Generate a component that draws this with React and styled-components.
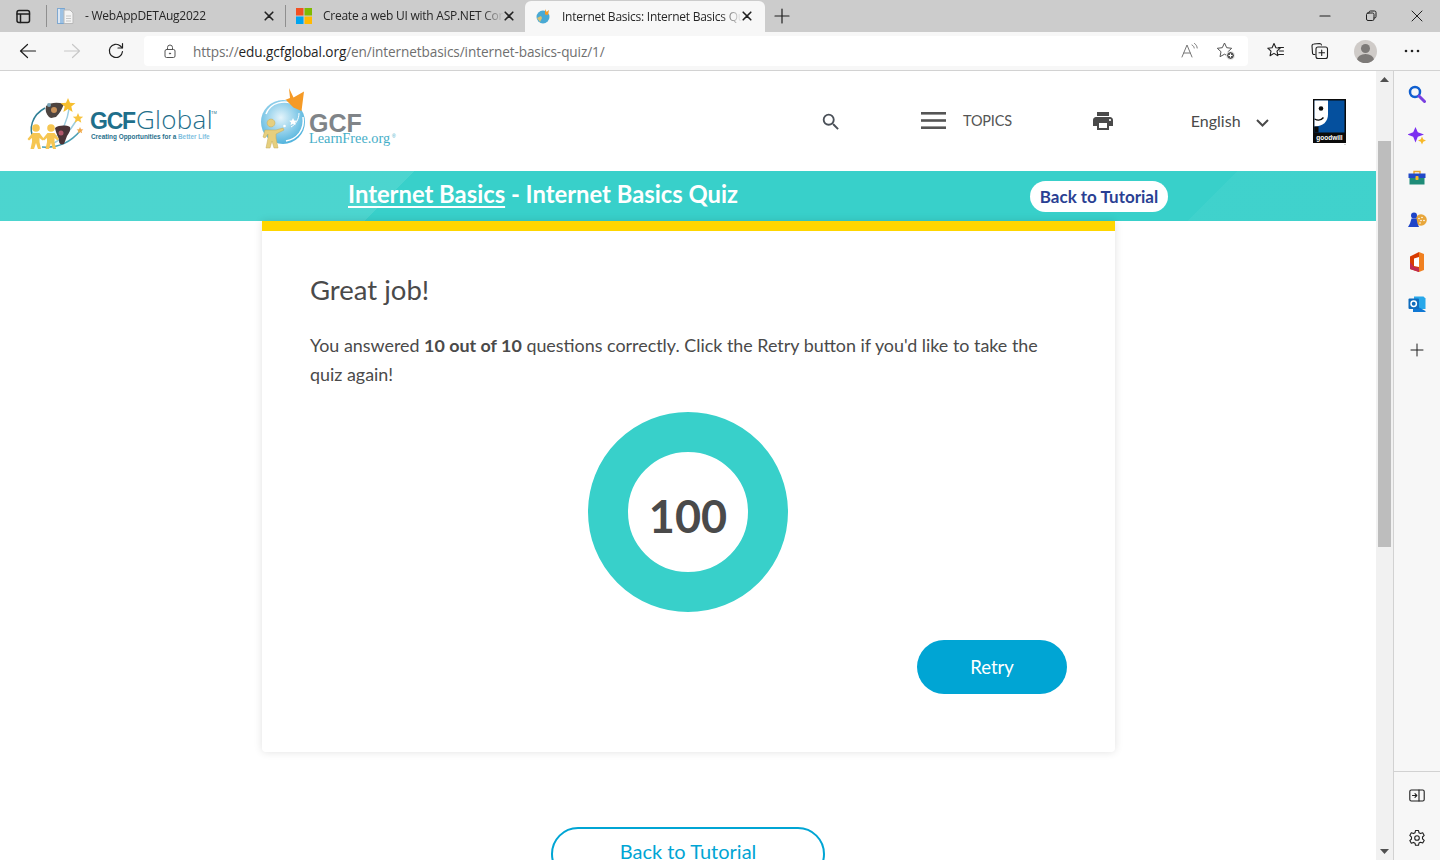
import React from 'react';
import styled, { createGlobalStyle } from 'styled-components';

const GlobalStyle = createGlobalStyle`
  html, body { margin: 0; padding: 0; height: 100%; overflow: hidden; background: #fff; }
  body { font-family: "Lato", "Noto Sans", sans-serif; color: #4a4a4a; }
  * { box-sizing: border-box; }
`;

const Window = styled.div`
  width: 1440px;
  height: 860px;
  display: flex;
  flex-direction: column;
  overflow: hidden;
`;

/* browser chrome */
const TabStrip = styled.div`
  height: 32px;
  background: #cccccc;
  display: flex;
  align-items: flex-end;
  flex-shrink: 0;
`;

const StripButton = styled.div`
  width: 47px;
  height: 32px;
  display: flex;
  align-items: center;
  justify-content: center;
  border-right: 1px solid #8f8f8f;
  border-image: linear-gradient(transparent 6px, #8f8f8f 6px, #8f8f8f 26px, transparent 26px) 1;
  flex-shrink: 0;
`;

const Tab = styled.div`
  width: ${p => p.$width}px;
  height: ${p => (p.$active ? 31 : 32)}px;
  margin-left: ${p => p.$gap || 0}px;
  padding: 0 ${p => p.$end || 11}px 1px 10px;
  display: flex;
  align-items: center;
  background: ${p => (p.$active ? '#f7f7f7' : 'transparent')};
  border-radius: 6px 6px 0 0;
  border-right: ${p => (p.$divider ? '1px solid #8f8f8f' : '0')};
  border-image: ${p => (p.$divider ? 'linear-gradient(transparent 6px, #8f8f8f 6px, #8f8f8f 26px, transparent 26px) 1' : 'none')};
  flex-shrink: 0;
`;

const TabTitle = styled.span`
  flex: 1;
  margin-left: ${p => p.$indent}px;
  font-family: "Open Sans", "Noto Sans", sans-serif;
  font-size: 12px;
  letter-spacing: -0.25px;
  color: #262626;
  white-space: nowrap;
  overflow: hidden;
  -webkit-mask-image: linear-gradient(90deg, #000 88%, transparent);
  mask-image: linear-gradient(90deg, #000 88%, transparent);
`;

const NewTab = styled.div`
  width: 34px;
  height: 32px;
  display: flex;
  align-items: center;
  justify-content: center;
`;

const WindowControls = styled.div`
  margin-left: auto;
  height: 32px;
  display: flex;
`;

const WindowButton = styled.div`
  width: 46px;
  height: 32px;
  display: flex;
  align-items: center;
  justify-content: center;
`;

const Toolbar = styled.div`
  height: 39px;
  background: #f7f7f7;
  border-bottom: 1px solid #d2d2d2;
  display: flex;
  align-items: center;
  padding-left: 6px;
  flex-shrink: 0;
`;

const ToolButton = styled.div`
  width: ${p => p.$width || 44}px;
  height: 30px;
  display: flex;
  align-items: center;
  justify-content: center;
  flex-shrink: 0;
`;

const AddressBar = styled.div`
  width: 1104px;
  height: 30px;
  margin: 0 6px;
  background: #fff;
  border-radius: 4px;
  display: flex;
  align-items: center;
  padding: 0 3px 0 19px;
  flex-shrink: 0;
`;

const Url = styled.div`
  margin-left: 16px;
  flex: 1;
  font-family: "Open Sans", "Noto Sans", sans-serif;
  font-size: 13.6px;
  letter-spacing: -0.1px;
  color: #6f6f6f;
  b { font-weight: 400; color: #1f1f1f; }
`;

const Avatar = styled.div`
  width: 23px;
  height: 23px;
  border-radius: 50%;
  background: #cfcbc8;
  position: relative;
  overflow: hidden;
  &::before {
    content: '';
    position: absolute;
    left: 7px;
    top: 4px;
    width: 9px;
    height: 9px;
    border-radius: 50%;
    background: #7d7a78;
  }
  &::after {
    content: '';
    position: absolute;
    left: 3px;
    top: 14px;
    width: 17px;
    height: 12px;
    border-radius: 50%;
    background: #7d7a78;
  }
`;

/* content area */
const Body = styled.div`
  flex: 1;
  display: flex;
  min-height: 0;
`;

const Page = styled.div`
  width: 1376px;
  height: 100%;
  overflow: hidden;
  background: #fff;
  flex-shrink: 0;
`;

const Header = styled.header`
  height: 100px;
  display: flex;
  align-items: center;
  padding-left: 28px;
`;

const LogoBox = styled.div`
  width: ${p => p.$width}px;
  margin-left: ${p => p.$gap || 0}px;
  height: ${p => p.$height}px;
  flex-shrink: 0;
  svg { display: block; overflow: visible; }
`;

const NavItem = styled.div`
  display: flex;
  align-items: center;
  margin-left: ${p => p.$gap}px;
  margin-top: ${p => p.$drop || 0}px;
  flex-shrink: 0;
  color: #4a4a4a;
`;

const NavLabel = styled.span`
  font-size: ${p => p.$size}px;
  letter-spacing: ${p => p.$track || 0}px;
  margin-left: ${p => p.$indent || 0}px;
  margin-bottom: 1px;
  color: ${p => p.$color || '#555'};
`;

const Chevron = styled.svg`
  margin: 3px 0 0 15px;
`;

const Band = styled.div`
  height: 50px;
  display: flex;
  align-items: center;
  padding-left: 348px;
  background:
    linear-gradient(135deg, rgba(255,255,255,0.1) 293px, transparent 293px),
    linear-gradient(135deg, transparent 875px, rgba(255,255,255,0.04) 875px),
    #38d0ca;
`;

const BandTitle = styled.h1`
  margin: 0 0 5px;
  width: 682px;
  font-size: 23.8px;
  font-weight: 700;
  color: #fff;
  white-space: nowrap;
  a { color: inherit; text-decoration: underline; text-underline-offset: 3px; }
`;

const BandButton = styled.a`
  width: 138px;
  height: 31px;
  border-radius: 16px;
  background: #fff;
  color: #2a3f93;
  font-size: 17px;
  font-weight: 700;
  display: flex;
  align-items: center;
  justify-content: center;
  white-space: nowrap;
`;

const Card = styled.section`
  width: 853px;
  height: 531px;
  margin-left: 262px;
  background: #fff;
  border-top: 10px solid #ffd600;
  box-shadow: 0 0 8px rgba(0, 0, 0, 0.12);
  border-radius: 0 0 4px 4px;
  padding: 39px 48px 0;
`;

const Heading = styled.h2`
  margin: 0;
  font-size: 27.5px;
  line-height: 40px;
  font-weight: 400;
  color: #4a4a4a;
`;

const Message = styled.p`
  margin: 21px 0 0;
  font-size: 17.9px;
  line-height: 29px;
  color: #4a4a4a;
  b { font-weight: 700; }
`;

const Donut = styled.div`
  width: 200px;
  height: 200px;
  margin: 23px 0 0 278px;
  border-radius: 50%;
  border: 40px solid #38d0ca;
  display: flex;
  align-items: center;
  justify-content: center;
`;

const Score = styled.span`
  font-size: 45px;
  font-weight: 700;
  color: #4a4a4a;
  margin-top: 8px;
`;

const ButtonRow = styled.div`
  display: flex;
  justify-content: flex-end;
  margin-top: 28px;
`;

const RetryButton = styled.button`
  width: 150px;
  height: 54px;
  border: 0;
  border-radius: 27px;
  background: #00a5d4;
  color: #fff;
  font: 400 18.5px "Lato", sans-serif;
`;

const OutlineRow = styled.div`
  display: flex;
  padding-left: 551px;
  margin-top: 75px;
`;

const OutlineButton = styled.a`
  width: 274px;
  height: 54px;
  border: 2px solid #00a5d4;
  border-radius: 27px;
  padding-bottom: 6px;
  color: #00a5d4;
  font-size: 20px;
  display: flex;
  align-items: center;
  justify-content: center;
`;

const Scrollbar = styled.div`
  width: 17px;
  height: 100%;
  background: #f1f1f1;
  display: flex;
  flex-direction: column;
  align-items: center;
  flex-shrink: 0;
`;

const ScrollArrow = styled.div`
  width: 16px;
  height: 17px;
  display: flex;
  align-items: center;
  justify-content: center;
`;

const ScrollThumb = styled.div`
  width: 13px;
  height: 406px;
  margin-top: 53px;
  margin-bottom: auto;
  background: #bdbdbd;
`;

const Sidebar = styled.aside`
  width: 47px;
  height: 100%;
  background: #f7f7f7;
  border-left: 1px solid #d2d2d2;
  display: flex;
  flex-direction: column;
  flex-shrink: 0;
`;

const SideIcon = styled.div`
  width: 46px;
  height: 42px;
  margin-top: ${p => p.$top || 0}px;
  display: flex;
  align-items: center;
  justify-content: center;
  flex-shrink: 0;
  svg { display: block; }
`;

const SideTop = styled.div`
  padding-top: 2px;
  flex: 1;
`;

const SideBottom = styled.div`
  width: 46px;
  height: 89px;
  border-top: 1px solid #d2d2d2;
  padding-top: 3px;
`;

const Stroke = ({ size = 16, children, color = '#1f1f1f', sw = 1.2 }) => (
  <svg width={size} height={size} viewBox={`0 0 ${size} ${size}`} fill="none" stroke={color} strokeWidth={sw} strokeLinecap="round" strokeLinejoin="round">
    {children}
  </svg>
);

const CloseGlyph = () => (
  <Stroke size={10} sw={1.6} color="#222"><path d="M1.200 1.200l7.600 7.600M8.800 1.200l-7.600 7.600" /></Stroke>
);

const Person = ({ x }) => (
  <g transform={`translate(${x} 0)`} fill="#f6c652">
    <circle cx="0" cy="33" r="3.800" />
    <path d="M-3.500 38h7l4.500 6-1.500 1.500-3-2.500V47l1.500 7H2L0 48l-2 6h-3.500l1.500-7v-4l-3 2.500L-8.500 44z" />
  </g>
);

const GcfGlobalLogo = () => (
  <svg width="190" height="52" viewBox="0 0 190 52">
    <path d="M17 13C4 20 0 34 6 44" fill="none" stroke="#2f7f96" strokeWidth="1.500" />
    <path d="M14 52C28 53 42 48 52 36" fill="none" stroke="#4a9fb5" strokeWidth="1.500" />
    <path d="M26 48C34 44 42 36 48 26" fill="none" stroke="#9ccde0" strokeWidth="1.500" />
    <path d="M28 42C33 37 39 28 41 14" fill="none" stroke="#9ccde0" strokeWidth="1.500" />
    <path d="M18 11c5-4 12-4 18-2-2 5-4 9-8 13-3 0-4 2-7 0-3-3-4-7-3-11z" fill="#4d4440" />
    <circle cx="26" cy="15" r="3" fill="#c9925a" />
    <circle cx="21" cy="10" r="2" fill="#7aa4b8" />
    <path d="M27 33c4-3 11-3 15-1 1 3-1 6-3 9l-3 8c-3 1-5 0-5-3 0-4-3-7-4-13z" fill="#4a3438" />
    <circle cx="33" cy="38" r="2.500" fill="#b0566a" />
    <path d="M40 3l2 4.800 5.500.4-4.200 3.400 1.300 5.300-4.600-2.900-4.600 2.900 1.300-5.300-4.200-3.400 5.500-.4z" fill="#f7bf2e" />
    <path d="M50 18l1.500 3.400 3.700.3-2.800 2.400.9 3.600-3.300-1.900-3.300 1.900.9-3.600-2.800-2.400 3.700-.3z" fill="#f7c440" />
    <path d="M52 32l1 2.200 2.400.2-1.800 1.600.5 2.300-2.100-1.200-2.100 1.200.5-2.300-1.800-1.600 2.400-.2z" fill="#f1a94a" />
    <Person x={8} />
    <Person x={23} />
    <text x="62" y="34" fontFamily="'Liberation Sans', sans-serif" fontSize="23" fontWeight="700" fill="#1f6f8b" letterSpacing="-1.200">GCF</text>
    <text x="108" y="34" fontFamily="'Open Sans', sans-serif" fontSize="26" fontWeight="300" fill="#1f6f8b" letterSpacing="0.300">Global</text>
    <text x="183" y="19" fontFamily="'Liberation Sans', sans-serif" fontSize="4" fill="#1f6f8b">TM</text>
    <text x="63" y="44" fontFamily="'Liberation Sans', sans-serif" fontSize="6.400" fontWeight="700" fill="#1f6f8b">Creating Opportunities for a <tspan fill="#7fbfe0">Better Life</tspan></text>
  </svg>
);

const LearnFreeLogo = () => (
  <svg width="138" height="66" viewBox="0 0 138 66">
    <defs>
      <radialGradient id="globeFill" cx="0.45" cy="0.4" r="0.65">
        <stop offset="0" stopColor="#e4f4fb" />
        <stop offset="1" stopColor="#45aedb" />
      </radialGradient>
    </defs>
    <circle cx="23" cy="34" r="22" fill="url(#globeFill)" />
    <path d="M6 26C10 15 24 10 38 18" fill="none" stroke="#fff" strokeWidth="1.500" />
    <path d="M26 53C37 51 45 42 43 29" fill="none" stroke="#fff" strokeWidth="1.500" />
    <path d="M31 39C36 36 39 31 39 25" fill="none" stroke="#fff" strokeWidth="1" />
    <path d="M29 0l4.500 9.500L44 3.500l-2.500 19.500-8-3.500-7.500-7.500-1 0 5-2z" fill="#f59a26" />
    <path d="M33 30l1.200 2.500 2.700.3-2 1.800.6 2.600-2.500-1.400-2.500 1.400.6-2.600-2-1.800 2.700-.3z" fill="#fff" />
    <circle cx="24.500" cy="38" r="1.300" fill="#fff" />
    <path d="M11 39a4 4 0 1 1 .01 0zM5 42h11l7-2 1 2-8 4v4l2 10h-4l-2-7-2 7H6l2-10v-4l-3 4-2-1z" fill="#e6cf7e" stroke="#c5ab58" strokeWidth=".5" />
    <text x="49" y="44" fontFamily="'Liberation Sans', sans-serif" fontSize="25" fontWeight="700" fill="#808488">GCF</text>
    <text x="49" y="55" fontFamily="'Liberation Serif', serif" fontSize="14.300" fill="#46aec8">LearnFree.org</text>
    <text x="132" y="50" fontFamily="'Liberation Sans', sans-serif" fontSize="5" fill="#46aec8">®</text>
  </svg>
);

const GoodwillLogo = () => (
  <svg width="33" height="46" viewBox="0 0 33 46">
    <rect width="33" height="44" fill="#0b0b0b" />
    <rect x="1.500" y="1.500" width="30" height="32" fill="#05509e" />
    <path d="M1.500 1.500h13.500v14c0 7-5 12-13.500 12z" fill="#fff" />
    <circle cx="8" cy="9.500" r="2.300" fill="#0b0b0b" />
    <path d="M1.500 20c4 2 7 1 9-1.500" fill="none" stroke="#0b0b0b" strokeWidth="1.300" />
    <path d="M1.500 27.500h4v6h-4z" fill="#0b0b0b" />
    <text x="16.500" y="41" textAnchor="middle" fontFamily="'Liberation Sans', sans-serif" fontSize="6.500" fontWeight="700" fill="#fff">goodwill</text>
    <circle cx="32" cy="45.500" r=".5" fill="#888" />
  </svg>
);

const App = () => (
  <Window>
    <GlobalStyle />
    <TabStrip>
      <StripButton>
        <Stroke size={16} sw={1.500}><rect x="2" y="2.500" width="12.500" height="12" rx="2" /><path d="M2 6h12.500M5.500 6v8.500" /></Stroke>
      </StripButton>
      <Tab $width={239} $divider>
        <svg width="17" height="16" viewBox="0 0 17 16">
          <rect x="0.500" y="0.500" width="7" height="15" fill="#dce6f2" stroke="#7fa8d0" />
          <rect x="3" y="0.500" width="4" height="15" fill="#5c9bd6" opacity="0.5" />
          <path d="M7 2h6l3 3v10.500H7z" fill="#f4f4f4" stroke="#b8b8b8" />
          <path d="M9 8h5M9 10.500h5M9 13h5" stroke="#c4c4c4" />
        </svg>
        <TabTitle $indent={11}>- WebAppDETAug2022</TabTitle>
        <CloseGlyph />
      </Tab>
      <Tab $width={238} $end={10}>
        <svg width="16" height="16" viewBox="0 0 16 16">
          <rect width="7.500" height="7.500" fill="#f25022" />
          <rect x="8.500" width="7.500" height="7.500" fill="#7fba00" />
          <rect y="8.500" width="7.500" height="7.500" fill="#00a4ef" />
          <rect x="8.500" y="8.500" width="7.500" height="7.500" fill="#ffb900" />
        </svg>
        <TabTitle $indent={11}>Create a web UI with ASP.NET Core</TabTitle>
        <CloseGlyph />
      </Tab>
      <Tab $width={240} $active $gap={1} $end={13}>
        <svg width="16" height="16" viewBox="0 0 16 16">
          <circle cx="8" cy="9" r="6.500" fill="#49a9d4" />
          <path d="M10 1l1.500 3L14 2l-1 5-3-.500z" fill="#f59a26" />
          <path d="M2 10l4-2 1 2-2 4z" fill="#d9c173" />
        </svg>
        <TabTitle $indent={11}>Internet Basics: Internet Basics Quiz</TabTitle>
        <CloseGlyph />
      </Tab>
      <NewTab>
        <Stroke size={16} sw={1.200}><path d="M8 1v14M1 8h14" /></Stroke>
      </NewTab>
      <WindowControls>
        <WindowButton><Stroke size={12}><path d="M1 6h10" /></Stroke></WindowButton>
        <WindowButton><Stroke size={12} sw={1}><rect x="1.500" y="3" width="7.500" height="7.500" rx="1.500" /><path d="M4 3V2.500A1.500 1.500 0 0 1 5.500 1h4A1.500 1.500 0 0 1 11 2.500v4A1.500 1.500 0 0 1 9.500 8H9" /></Stroke></WindowButton>
        <WindowButton><Stroke size={12} sw={1}><path d="M1 1l10 10M11 1L1 11" /></Stroke></WindowButton>
      </WindowControls>
    </TabStrip>
    <Toolbar>
      <ToolButton><Stroke size={18} sw={1.200}><path d="M16.500 9H1.500M8.500 2.500L1.500 9l7 6.500" /></Stroke></ToolButton>
      <ToolButton><Stroke size={18} sw={1.200} color="#c8c8c8"><path d="M1.500 9H16.500M9.500 2.500L16.500 9l-7 6.500" /></Stroke></ToolButton>
      <ToolButton><Stroke size={18} sw={1.200}><path d="M15.500 9.500A6.600 6.600 0 1 1 13.400 4L15 5.600" /><path d="M15.500 1.500v4.500H11" /></Stroke></ToolButton>
      <AddressBar>
        <Stroke size={14} sw={1} color="#555"><rect x="2" y="5.500" width="10" height="8" rx="1.500" /><path d="M4.500 5.500V3.500a2.500 2.500 0 0 1 5 0v2" /><circle cx="7" cy="9.500" r=".6" fill="#555" /></Stroke>
        <Url>https://<b>edu.gcfglobal.org</b>/en/internetbasics/internet-basics-quiz/1/</Url>
        <ToolButton $width={36}>
          <Stroke size={18} sw={1} color="#777"><path d="M2 15L7 3l5 12M3.800 11h6.400M12 3c1.500.8 2 1.800 2.200 3M14.500 1.500c1.500 1 2.500 2.500 2.700 4.500" /></Stroke>
        </ToolButton>
        <ToolButton $width={38}>
          <svg width="20" height="20" viewBox="0 0 20 20" fill="none" stroke="#555" strokeWidth="1">
            <path d="M8.500 2l2.200 4.700 5 .6-3.700 3.400 1 5-4.500-2.500-4.500 2.500 1-5-3.700-3.400 5-.6z" />
            <circle cx="14.500" cy="14.500" r="4" fill="#555" stroke="#fff" />
            <path d="M14.500 12.500v4M12.500 14.500h4" stroke="#fff" />
          </svg>
        </ToolButton>
      </AddressBar>
      <ToolButton $width={44}>
        <Stroke size={18} sw={1.100}><path d="M7 1.500l1.900 4.200 4.300.5-3.200 3 .9 4.500L7 11.400l-3.900 2.300.9-4.500-3.200-3 4.300-.5zM11.500 5.500h5M12.500 9h4M11.500 12.500h5" /></Stroke>
      </ToolButton>
      <ToolButton $width={44}>
        <Stroke size={18} sw={1.100}><path d="M4 12.500H3a1.500 1.500 0 0 1-1.500-1.500L1 4a2 2 0 0 1 2-2l5.500-.5c1 0 1.800.5 2 1.500" /><rect x="5" y="5" width="11.500" height="11.500" rx="2" /><path d="M10.700 8v5.500M8 10.700h5.500" /></Stroke>
      </ToolButton>
      <ToolButton $width={46}><Avatar /></ToolButton>
      <ToolButton $width={47}>
        <svg width="16" height="4" viewBox="0 0 16 4" fill="#222"><circle cx="2" cy="2" r="1.300" /><circle cx="8" cy="2" r="1.300" /><circle cx="14" cy="2" r="1.300" /></svg>
      </ToolButton>
    </Toolbar>
    <Body>
      <Page>
        <Header>
          <LogoBox $width={190} $height={52}><GcfGlobalLogo /></LogoBox>
          <LogoBox $width={138} $height={66} $gap={42}><LearnFreeLogo /></LogoBox>
          <NavItem $gap={422} $drop={2}>
            <svg width="22" height="22" viewBox="0 0 24 24" fill="#4a5058"><path d="M15.500 14h-.79l-.28-.27A6.470 6.470 0 0 0 16 9.500 6.500 6.500 0 1 0 9.500 16c1.610 0 3.090-.59 4.230-1.570l.27.28v.79l5 4.990L20.490 19l-4.990-5zm-6 0C7.010 14 5 11.990 5 9.500S7.010 5 9.500 5 14 7.010 14 9.500 11.990 14 9.500 14z" /></svg>
          </NavItem>
          <NavItem $gap={79}>
            <svg width="25" height="18" viewBox="0 0 25 18" fill="#555"><rect width="25" height="2.600" /><rect y="7.200" width="25" height="2.600" /><rect y="14.400" width="25" height="2.600" /></svg>
            <NavLabel $size={14.5} $track={-0.2} $indent={17}>TOPICS</NavLabel>
          </NavItem>
          <NavItem $gap={79}>
            <svg width="24" height="24" viewBox="0 0 24 24" fill="#4a4a4a"><path d="M19 8H5c-1.660 0-3 1.340-3 3v6h4v4h12v-4h4v-6c0-1.660-1.340-3-3-3zm-3 11H8v-5h8v5zm3-7c-.55 0-1-.45-1-1s.45-1 1-1 1 .45 1 1-.45 1-1 1zm-1-9H6v4h12V3z" /></svg>
          </NavItem>
          <NavItem $gap={76}>
            <NavLabel $size={16} $color="#4a4a4a">English</NavLabel>
            <Chevron width="13" height="8" viewBox="0 0 13 8" fill="none" stroke="#4a4a4a" strokeWidth="2"><path d="M1 1l5.500 5.500L12 1" /></Chevron>
          </NavItem>
          <NavItem $gap={44} $drop={2}><GoodwillLogo /></NavItem>
        </Header>
        <Band>
          <BandTitle><a>Internet Basics</a> - Internet Basics Quiz</BandTitle>
          <BandButton>Back to Tutorial</BandButton>
        </Band>
        <Card>
          <Heading>Great job!</Heading>
          <Message>You answered <b>10 out of 10</b> questions correctly. Click the Retry button if you'd like to take the quiz again!</Message>
          <Donut><Score>100</Score></Donut>
          <ButtonRow><RetryButton>Retry</RetryButton></ButtonRow>
        </Card>
        <OutlineRow><OutlineButton>Back to Tutorial</OutlineButton></OutlineRow>
      </Page>
      <Scrollbar>
        <ScrollArrow><svg width="9" height="5" viewBox="0 0 9 5" fill="#505050"><path d="M4.500 0L9 5H0z" /></svg></ScrollArrow>
        <ScrollThumb />
        <ScrollArrow><svg width="9" height="5" viewBox="0 0 9 5" fill="#505050"><path d="M4.500 5L9 0H0z" /></svg></ScrollArrow>
      </Scrollbar>
      <Sidebar>
        <SideTop>
          <SideIcon>
            <svg width="18" height="18" viewBox="0 0 18 18" fill="none">
              <circle cx="7" cy="7" r="5" stroke="#0f5fd0" strokeWidth="2.500" />
              <path d="M11 11l5.500 5.500" stroke="#7a3fe0" strokeWidth="3" strokeLinecap="round" />
            </svg>
          </SideIcon>
          <SideIcon>
            <svg width="18" height="18" viewBox="0 0 18 18">
              <path d="M7.500 0l2.300 5.200L16 7.500l-6.200 2.300L7.500 15.500l-2.300-5.700L-1 7.500l6.200-2.300z" fill="#7a2ff0" />
              <path d="M14 9.500l1.200 2.800 2.800 1.200-2.800 1.200L14 17.500l-1.200-2.800-2.800-1.200 2.800-1.200z" fill="#f8b928" />
            </svg>
          </SideIcon>
          <SideIcon>
            <svg width="18" height="18" viewBox="0 0 18 18">
              <path d="M6 5V2.500h6V5" fill="none" stroke="#e8a32a" strokeWidth="1.400" />
              <rect x="0.500" y="4.500" width="17" height="4.500" fill="#2148c8" />
              <rect x="1.500" y="9" width="15" height="6.500" fill="#1e8c78" />
              <rect x="7.500" y="7" width="3" height="4" rx=".8" fill="#f5b92a" />
            </svg>
          </SideIcon>
          <SideIcon>
            <svg width="19" height="18" viewBox="0 0 19 18">
              <circle cx="13" cy="9" r="5.800" fill="#e8a63a" />
              <circle cx="11" cy="7.500" r=".8" fill="#fff" /><circle cx="14" cy="6.500" r=".8" fill="#fff" /><circle cx="16" cy="9.500" r=".8" fill="#fff" /><circle cx="13" cy="9.500" r=".8" fill="#fff" /><circle cx="12" cy="12" r=".8" fill="#fff" />
              <circle cx="6" cy="4.500" r="3" fill="#1f45c8" />
              <path d="M3.500 7.500h5l1 5 1.500 3.500H0l2-3.500z" fill="#1f45c8" />
            </svg>
          </SideIcon>
          <SideIcon>
            <svg width="16" height="20" viewBox="0 0 16 20">
              <path d="M1 4.500L10 0v20l-9-3z" fill="#d83b01" />
              <path d="M1 10v7l9 3v-4l-5-1z" fill="#c02a50" />
              <path d="M5 6.500l5-1.500v10l-5-1z" fill="#fff" />
              <path d="M10 0l5 2v16l-5 2z" fill="#f08020" />
            </svg>
          </SideIcon>
          <SideIcon>
            <svg width="18" height="18" viewBox="0 0 18 18">
              <path d="M6 1.500h9.500L17.500 3.500V14H6z" fill="#28a8ea" />
              <path d="M5 9l12.500 7V17H5z" fill="#0f78d4" />
              <rect x="0.500" y="3.500" width="10.500" height="10.500" rx="1" fill="#0f6cbd" />
              <circle cx="5.700" cy="8.700" r="2.700" fill="none" stroke="#fff" strokeWidth="1.500" />
            </svg>
          </SideIcon>
          <SideIcon $top={4}>
            <Stroke size={14} sw={1}><path d="M7 1v12M1 7h12" /></Stroke>
          </SideIcon>
        </SideTop>
        <SideBottom>
          <SideIcon>
            <Stroke size={16} sw={1.100}><rect x="0.800" y="2" width="14.400" height="11" rx="1.500" /><path d="M10 2v11M3.500 7.500h4M6 5.700l1.800 1.800L6 9.300" /></Stroke>
          </SideIcon>
          <SideIcon>
            <Stroke size={18} sw={1.100}><circle cx="9" cy="9" r="2.300" /><path d="M7.500 1.500h3l.5 2.300 1.500.8 2.200-.8 1.500 2.600-1.700 1.600v1.800l1.700 1.600-1.500 2.600-2.200-.8-1.500.8-.5 2.300h-3L7 14.200l-1.500-.8-2.200.8-1.500-2.600 1.700-1.600V8.200L1.800 6.400l1.500-2.600 2.200.8 1.500-.8z" /></Stroke>
          </SideIcon>
        </SideBottom>
      </Sidebar>
    </Body>
  </Window>
);

export default App;
